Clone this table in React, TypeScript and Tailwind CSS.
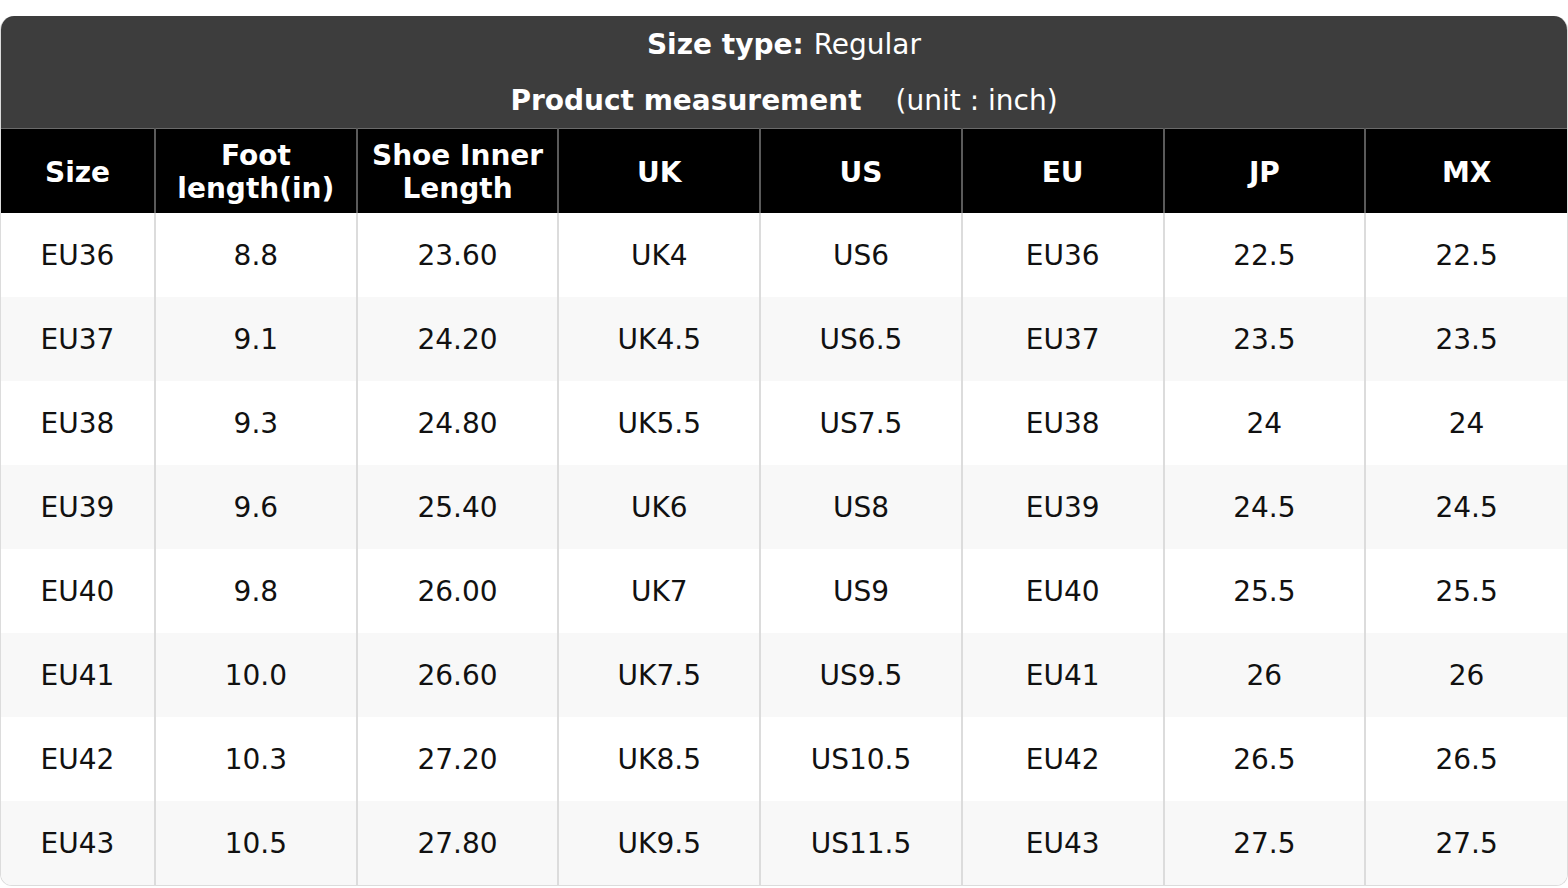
const COLUMNS = ['Size', 'Foot length(in)', 'Shoe Inner Length', 'UK', 'US', 'EU', 'JP', 'MX']

const ROWS = [
  ['EU36', '8.8', '23.60', 'UK4', 'US6', 'EU36', '22.5', '22.5'],
  ['EU37', '9.1', '24.20', 'UK4.5', 'US6.5', 'EU37', '23.5', '23.5'],
  ['EU38', '9.3', '24.80', 'UK5.5', 'US7.5', 'EU38', '24', '24'],
  ['EU39', '9.6', '25.40', 'UK6', 'US8', 'EU39', '24.5', '24.5'],
  ['EU40', '9.8', '26.00', 'UK7', 'US9', 'EU40', '25.5', '25.5'],
  ['EU41', '10.0', '26.60', 'UK7.5', 'US9.5', 'EU41', '26', '26'],
  ['EU42', '10.3', '27.20', 'UK8.5', 'US10.5', 'EU42', '26.5', '26.5'],
  ['EU43', '10.5', '27.80', 'UK9.5', 'US11.5', 'EU43', '27.5', '27.5'],
]

export default function App() {
  return (
    <div className="min-h-screen bg-white pt-[16px] font-['DejaVu_Sans',sans-serif]">
      <div className="rounded-t-[14px] rounded-b-[12px] overflow-hidden border border-[#dcdcdc] border-t-0">
        <div className="bg-[#3d3d3d] text-white text-[28px]">
          <div className="h-[56px] pt-[2px] flex items-center justify-center">
            <span className="font-bold">Size type:</span>
            <span className="ml-[10px]">Regular</span>
          </div>
          <div className="h-[56px] pt-[2px] flex items-center justify-center">
            <span className="font-bold">Product measurement</span>
            <span className="ml-[34px]">(unit : inch)</span>
          </div>
        </div>
        <table className="w-full table-fixed border-collapse">
          <colgroup>
            <col className="w-[154px]" />
            <col />
            <col />
            <col />
            <col />
            <col />
            <col />
            <col />
          </colgroup>
          <thead>
            <tr className="bg-black border-t border-[#6a6a6a]">
              {COLUMNS.map((c, i) => (
                <th
                  key={c}
                  className={`h-[84px] px-2 pt-[3px] text-white text-[28px] font-bold leading-[33px] text-center ${
                    i > 0 ? 'border-l-2 border-[#5a5a5a]' : ''
                  }`}
                >
                  {c}
                </th>
              ))}
            </tr>
          </thead>
          <tbody>
            {ROWS.map((row, r) => (
              <tr key={r} className={r % 2 === 1 ? 'bg-[#f8f8f8]' : 'bg-white'}>
                {row.map((v, i) => (
                  <td
                    key={i}
                    className={`h-[84px] pt-[3px] text-center text-[28px] text-[#111] ${
                      i > 0 ? 'border-l-2 border-[#dcdcdc]' : ''
                    }`}
                  >
                    {v}
                  </td>
                ))}
              </tr>
            ))}
          </tbody>
        </table>
      </div>
    </div>
  )
}
